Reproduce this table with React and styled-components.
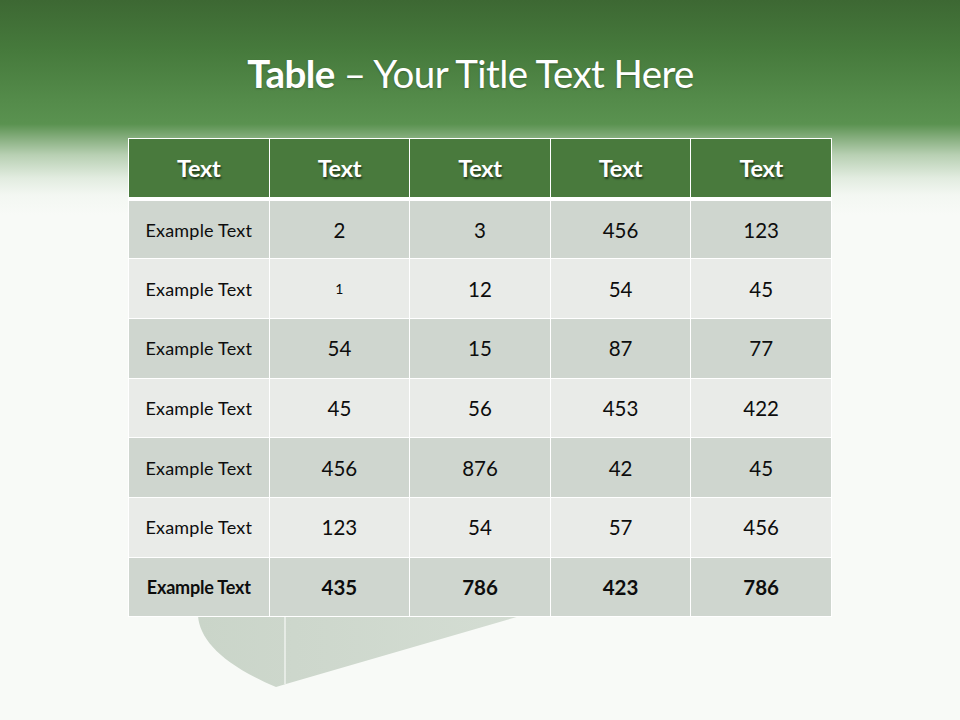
import React from "react";
import styled, { createGlobalStyle } from "styled-components";

const Global = createGlobalStyle`
  html, body { margin: 0; padding: 0; }
  body { font-family: Lato, "Open Sans", sans-serif; background: #f8faf7; }
`;

const Slide = styled.div`
  position: relative;
  width: 960px;
  height: 720px;
  overflow: hidden;
  display: flex;
  flex-direction: column;
  align-items: center;
  background: linear-gradient(
    to bottom,
    #3d6833 0px,
    #467a3c 50px,
    #548b4a 100px,
    #5a9250 124px,
    #86ae7e 138px,
    #b8d0b3 155px,
    #e2ece0 178px,
    #f3f7f2 195px,
    #f8faf7 215px,
    #f8faf7 100%
  );
`;

const BookArt = styled.svg`
  position: absolute;
  left: 0;
  top: 0;
  width: 960px;
  height: 720px;
  pointer-events: none;
`;

const TitleBar = styled.header`
  height: 138px;
  width: 100%;
  display: flex;
  justify-content: center;
  align-items: flex-start;
  padding: 50px 19px 0 0;
  box-sizing: border-box;
  position: relative;
`;

const Title = styled.h1`
  margin: 0;
  font-size: 38.5px;
  line-height: 46px;
  font-weight: 400;
  color: #ffffff;
  letter-spacing: -0.6px;
  text-shadow: 0 1px 2px rgba(0, 0, 0, 0.25);
  b { font-weight: 700; }
`;

const Table = styled.table`
  position: relative;
  width: 704px;
  table-layout: fixed;
  border-collapse: collapse;
`;

const HeadCell = styled.th`
  height: 58px;
  padding: 0;
  background: #497a3d;
  border: 1px solid #ffffff;
  border-bottom: 4px solid #ffffff;
  color: #ffffff;
  font-size: 23.5px;
  font-weight: 700;
  letter-spacing: -0.3px;
  text-shadow: 1px 2px 2px rgba(0, 0, 0, 0.55);
  text-align: center;
`;

const Row = styled.tr`
  height: 59.7px;
  background: ${(p) => (p.$shade ? "#cfd6cf" : "#e9ebe8")};
`;

const Cell = styled.td`
  padding: 0;
  border: 1.5px solid #ffffff;
  text-align: center;
  color: #0d0d0d;
  font-size: ${(p) => (p.$label ? "18px" : p.$small ? "14px" : "20.5px")};
  font-weight: ${(p) => (p.$bold ? 700 : 400)};
  letter-spacing: ${(p) => (p.$label ? (p.$bold ? "-0.2px" : "0.2px") : "0")};
`;

const rows = [
  ["2", "3", "456", "123"],
  ["1", "12", "54", "45"],
  ["54", "15", "87", "77"],
  ["45", "56", "453", "422"],
  ["456", "876", "42", "45"],
  ["123", "54", "57", "456"],
  ["435", "786", "423", "786"],
];

export default function App() {
  return (
    <>
      <Global />
      <Slide>
        <BookArt viewBox="0 0 960 720">
          <defs>
            <linearGradient id="bookFill" x1="0" y1="0" x2="1" y2="0">
              <stop offset="0" stopColor="#cad5c9" />
              <stop offset="0.3" stopColor="#cdd7cc" />
              <stop offset="1" stopColor="#d4ddd3" />
            </linearGradient>
          </defs>
          <path
            d="M198 616 C200 640 222 664 276 687 L286 684 L520 616 Z"
            fill="url(#bookFill)"
          />
          <line x1="285" y1="616" x2="285" y2="684" stroke="#eef2ee" strokeWidth="1.5" />
        </BookArt>
        <TitleBar>
          <Title>
            <b>Table</b> – Your Title Text Here
          </Title>
        </TitleBar>
        <Table>
          <thead>
            <tr>
              {["Text", "Text", "Text", "Text", "Text"].map((t, i) => (
                <HeadCell key={i}>{t}</HeadCell>
              ))}
            </tr>
          </thead>
          <tbody>
            {rows.map((r, i) => {
              const bold = i === rows.length - 1;
              return (
                <Row key={i} $shade={i % 2 === 0}>
                  <Cell $label $bold={bold}>Example Text</Cell>
                  {r.map((v, j) => (
                    <Cell key={j} $bold={bold} $small={i === 1 && j === 0}>
                      {v}
                    </Cell>
                  ))}
                </Row>
              );
            })}
          </tbody>
        </Table>
      </Slide>
    </>
  );
}
